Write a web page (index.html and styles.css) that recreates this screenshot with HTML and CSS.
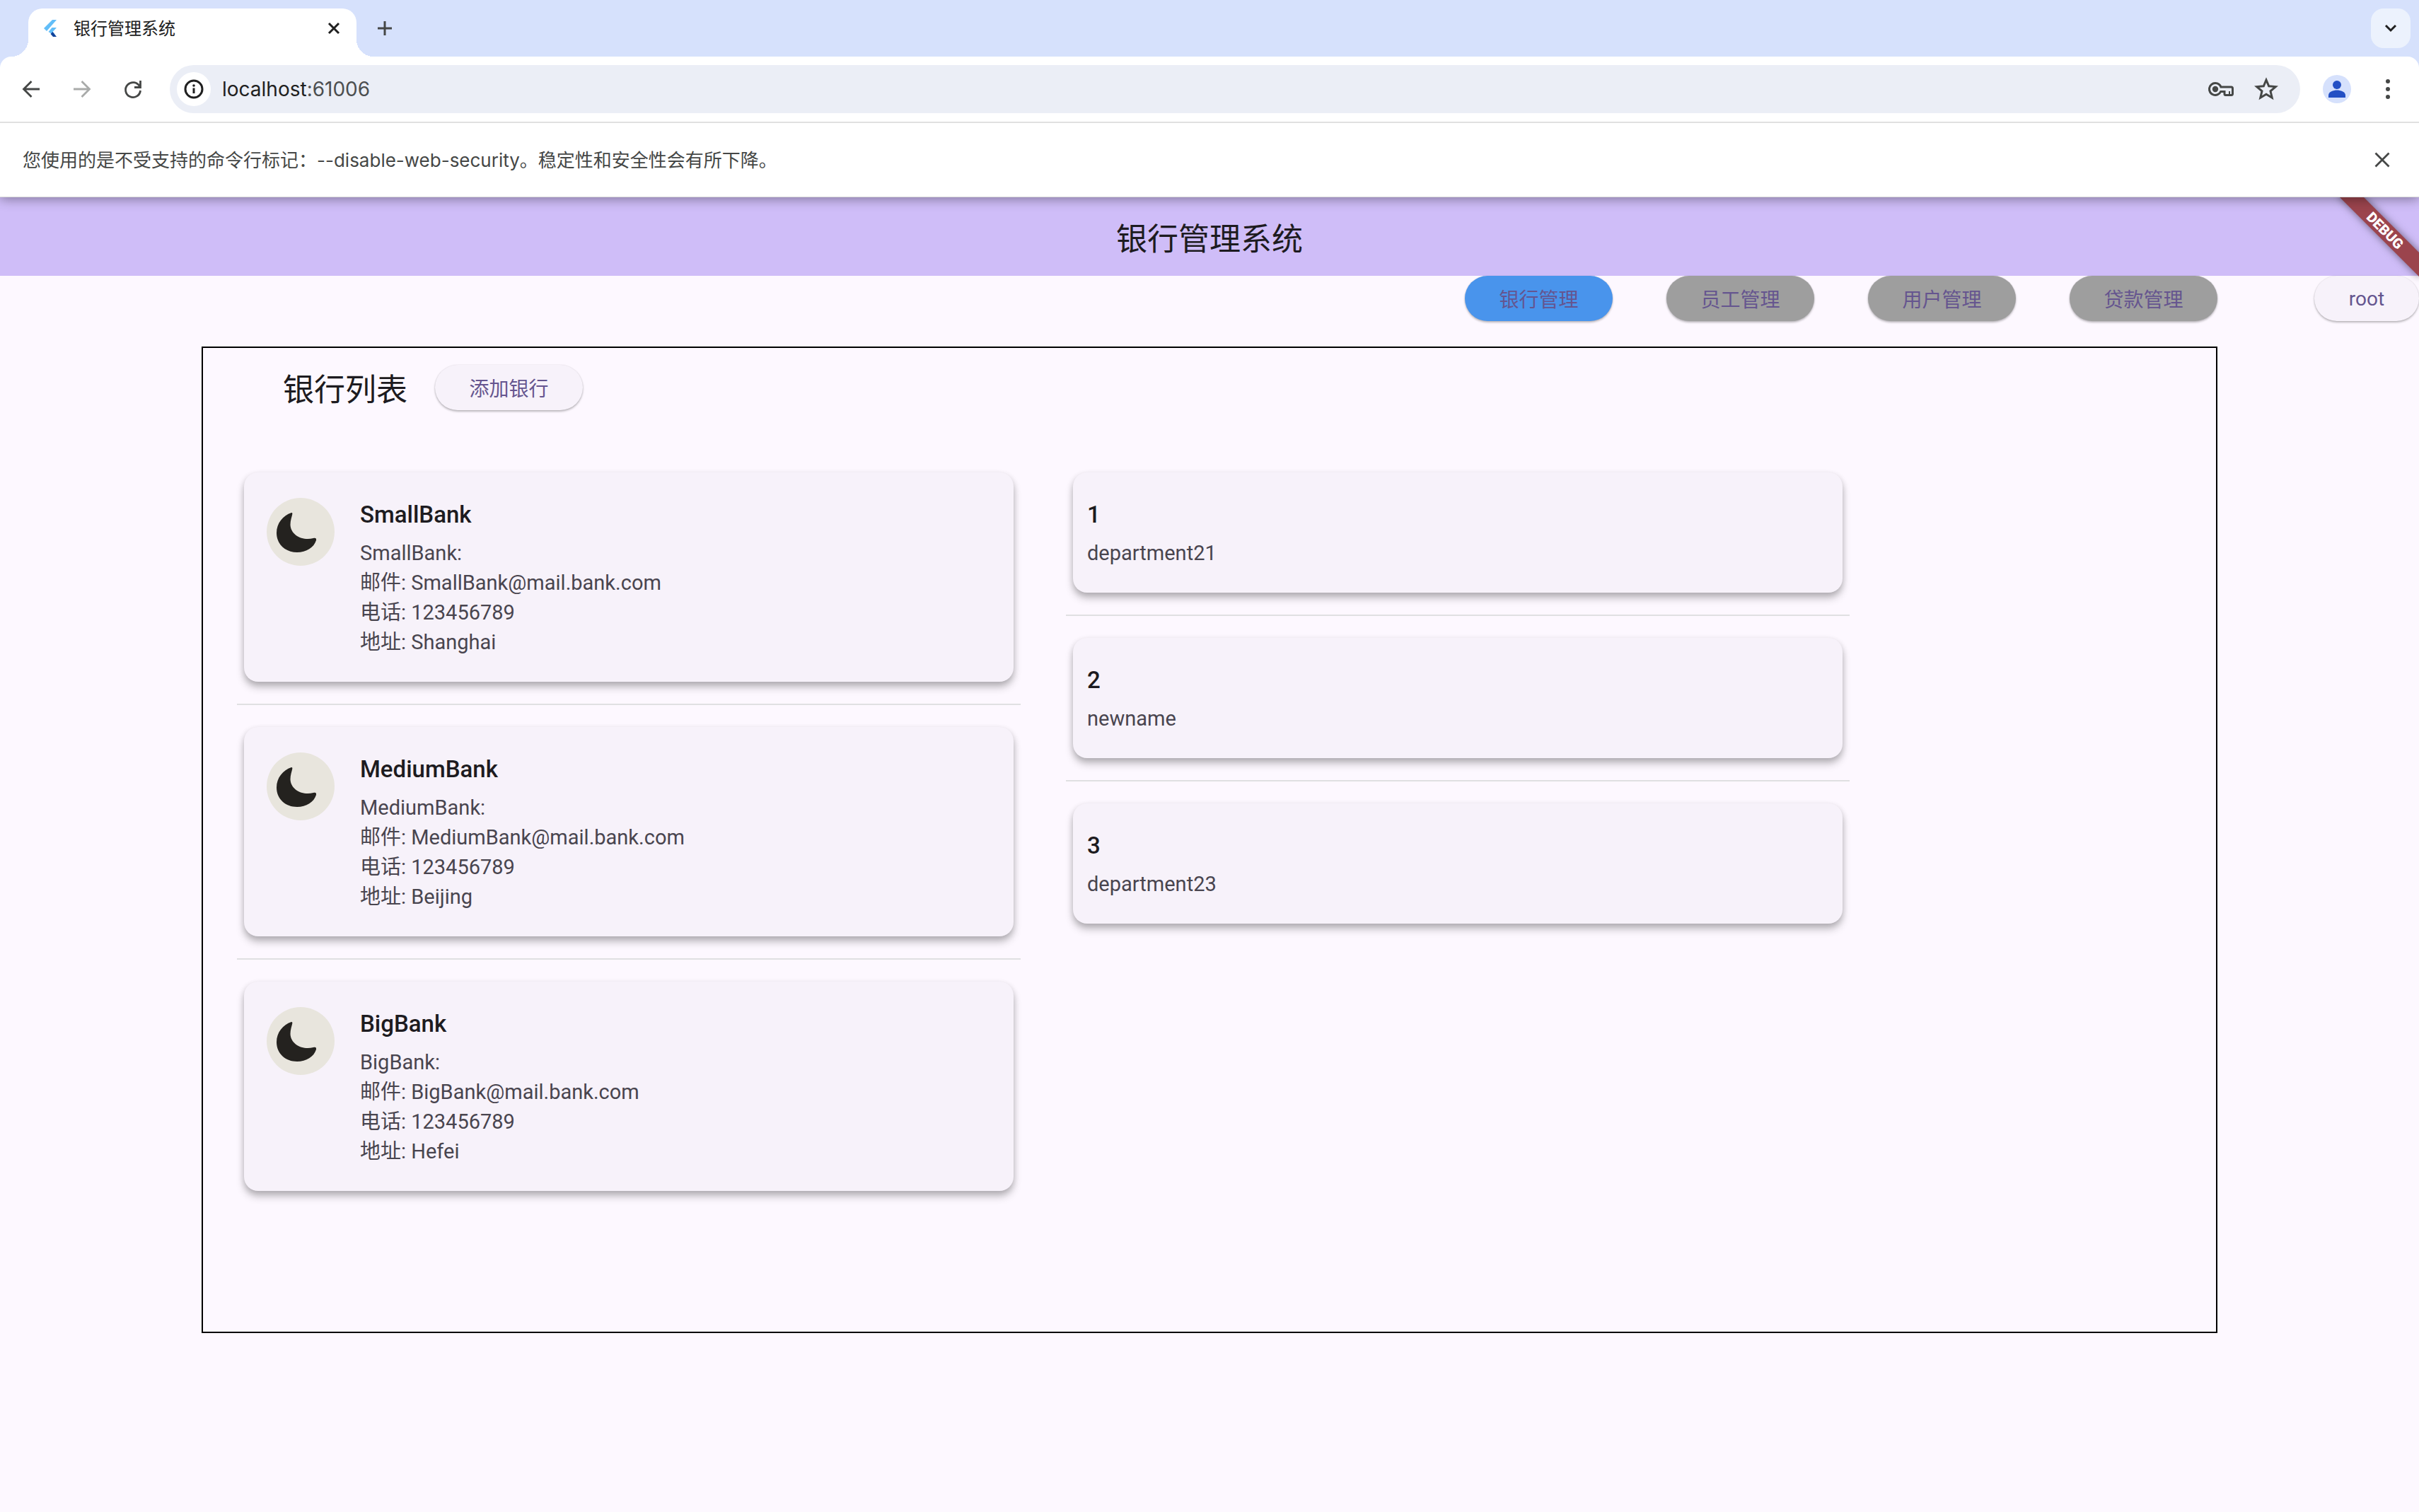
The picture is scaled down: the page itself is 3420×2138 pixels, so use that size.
FILE: index.html
```html
<!DOCTYPE html>
<html lang="zh-CN">
<head>
<meta charset="utf-8">
<title>银行管理系统</title>
<link rel="stylesheet" href="styles.css">
</head>
<body>
<svg class="defs" width="0" height="0" aria-hidden="true">
  <symbol id="moon" viewBox="0 0 96 96">
    <path fill="#24221f" d="M35 21C23 25 14 36 14 49.500C14 66 27 77 43 77C56 77 67 70 70 60C70.500 57 69 56 66 57C51 61 34 53 33.500 38C33.500 32 35.500 27 36.300 23C36.500 21.500 36 20.800 35 21Z"/>
  </symbol>
</svg>

<header class="browser">
  <div class="tabstrip">
    <div class="tab">
      <svg class="favicon" viewBox="0 0 32 32" aria-hidden="true">
        <path fill="#62bef8" d="M18 4h6L10 20l-4-4z"/>
        <path fill="#62bef8" d="M17.500 15H24l-5.500 6 3 3.500H18L12.500 21z"/>
        <path fill="#10439b" d="M15.500 24l3-3 5.500 7h-5z"/>
      </svg>
      <span class="tab-title">银行管理系统</span>
      <button class="icon-button tab-close" aria-label="关闭标签页">
        <svg width="32" height="32" viewBox="0 0 32 32"><path d="M9 9l14 14M23 9L9 23" fill="none" stroke="#202020" stroke-width="3"/></svg>
      </button>
    </div>
    <button class="icon-button new-tab" aria-label="新标签页">
      <svg width="32" height="32" viewBox="0 0 32 32"><path d="M16 6v20M6 16h20" fill="none" stroke="#454746" stroke-width="3"/></svg>
    </button>
    <button class="icon-button tab-search" aria-label="搜索标签页">
      <svg width="32" height="32" viewBox="0 0 32 32"><path d="M9 12l7 7 7-7" fill="none" stroke="#202020" stroke-width="3"/></svg>
    </button>
  </div>

  <div class="toolbar">
    <button class="icon-button tool" aria-label="返回">
      <svg width="36" height="36" viewBox="0 0 36 36"><path d="M30 18H8M18.500 7L7.500 18l11 11" fill="none" stroke="#454746" stroke-width="2.800"/></svg>
    </button>
    <button class="icon-button tool" aria-label="前进">
      <svg width="36" height="36" viewBox="0 0 36 36"><path d="M6 18h22M17.500 7l11 11-11 11" fill="none" stroke="#a9abaa" stroke-width="2.800"/></svg>
    </button>
    <button class="icon-button tool" aria-label="重新加载">
      <svg width="36" height="36" viewBox="0 0 36 36"><path d="M28.500 6v9.500H20M27.500 14.500A10.500 10.500 0 1 0 28.500 20" fill="none" stroke="#454746" stroke-width="2.800"/></svg>
    </button>
    <div class="omnibox">
      <button class="icon-button site-info" aria-label="网站信息">
        <svg width="32" height="32" viewBox="0 0 32 32"><circle cx="16" cy="16" r="12" fill="none" stroke="#202020" stroke-width="3"/><path d="M16 14.500V22" stroke="#202020" stroke-width="3"/><circle cx="16" cy="11" r="1.800" fill="#202020"/></svg>
      </button>
      <a class="url" href="#">localhost<span class="port">:61006</span></a>
      <button class="icon-button" aria-label="密码">
        <svg width="64" height="40" viewBox="0 0 64 40"><path d="M24 11.500a8.500 8.500 0 1 0 7.700 12H37v3.500q0 1.500 1.500 1.500h8q2 0 2-2V19q0-2-2-2H31.900A8.500 8.500 0 0 0 24 11.500z" fill="none" stroke="#454746" stroke-width="3"/><circle cx="24" cy="20" r="4.200" fill="#454746"/><path d="M44 23v5" stroke="#454746" stroke-width="2"/></svg>
      </button>
      <button class="icon-button" aria-label="收藏">
        <svg width="64" height="40" viewBox="0 0 64 40"><path d="M32 7l3.700 8.800 9.600.8-7.300 6.300 2.200 9.300-8.200-5-8.200 5 2.200-9.300-7.300-6.300 9.600-.8z" fill="none" stroke="#454746" stroke-width="3"/></svg>
      </button>
    </div>
    <button class="icon-button tool" aria-label="个人资料">
      <svg width="40" height="40" viewBox="0 0 40 40"><circle cx="20" cy="20" r="20" fill="#d6e1fc"/><circle cx="20" cy="14" r="6" fill="#2450c4"/><path d="M8 32v-3.500c0-4.500 7-7 12-7s12 2.500 12 7V32z" fill="#2450c4"/></svg>
    </button>
    <button class="icon-button tool" aria-label="菜单">
      <svg width="36" height="36" viewBox="0 0 36 36" fill="#454746"><circle cx="18" cy="7" r="3"/><circle cx="18" cy="18" r="3"/><circle cx="18" cy="29" r="3"/></svg>
    </button>
  </div>

  <div class="infobar">
    <p class="infobar-text">您使用的是不受支持的命令行标记：--disable-web-security。稳定性和安全性会有所下降。</p>
    <button class="icon-button tool" aria-label="关闭">
      <svg width="32" height="32" viewBox="0 0 32 32"><path d="M6.500 6.500l19 19M25.500 6.500l-19 19" fill="none" stroke="#454746" stroke-width="2.800"/></svg>
    </button>
  </div>
</header>

<main class="app">
  <div class="appbar">
    <h1 class="app-title">银行管理系统</h1>
  </div>
  <div class="debug"><span class="debug-ribbon">DEBUG</span></div>

  <nav class="nav">
    <button class="pill pill-active">银行管理</button>
    <button class="pill pill-idle">员工管理</button>
    <button class="pill pill-idle">用户管理</button>
    <button class="pill pill-idle">贷款管理</button>
    <button class="pill user">root</button>
  </nav>

  <section class="panel">
    <div class="panel-head">
      <h2 class="panel-title">银行列表</h2>
      <button class="pill">添加银行</button>
    </div>
    <div class="lists">
      <ul class="list">
        <li class="item">
          <article class="card bank">
            <svg class="avatar" aria-hidden="true"><use href="#moon"/></svg>
            <div>
              <h3 class="card-title">SmallBank</h3>
              <p class="card-text">SmallBank:<br>邮件: SmallBank@mail.bank.com<br>电话: 123456789<br>地址: Shanghai</p>
            </div>
          </article>
        </li>
        <li class="item">
          <article class="card bank">
            <svg class="avatar" aria-hidden="true"><use href="#moon"/></svg>
            <div>
              <h3 class="card-title">MediumBank</h3>
              <p class="card-text">MediumBank:<br>邮件: MediumBank@mail.bank.com<br>电话: 123456789<br>地址: Beijing</p>
            </div>
          </article>
        </li>
        <li class="item">
          <article class="card bank">
            <svg class="avatar" aria-hidden="true"><use href="#moon"/></svg>
            <div>
              <h3 class="card-title">BigBank</h3>
              <p class="card-text">BigBank:<br>邮件: BigBank@mail.bank.com<br>电话: 123456789<br>地址: Hefei</p>
            </div>
          </article>
        </li>
      </ul>
      <ul class="list">
        <li class="item">
          <article class="card department">
            <h3 class="card-title">1</h3>
            <p class="card-text">department21</p>
          </article>
        </li>
        <li class="item">
          <article class="card department">
            <h3 class="card-title">2</h3>
            <p class="card-text">newname</p>
          </article>
        </li>
        <li class="item">
          <article class="card department">
            <h3 class="card-title">3</h3>
            <p class="card-text">department23</p>
          </article>
        </li>
      </ul>
    </div>
  </section>
</main>
</body>
</html>
```
FILE: styles.css
```css
* {
  box-sizing: border-box;
}

body {
  margin: 0;
  min-height: 100vh;
  display: flex;
  flex-direction: column;
  background: #fdf8ff;
  color: #1d1b20;
  font-family: Roboto, "Noto Sans CJK SC", sans-serif;
  font-size: 28px;
}

h1, h2, h3, p, ul {
  margin: 0;
  padding: 0;
  font-weight: 400;
}

ul {
  list-style: none;
}

button {
  font: inherit;
  border: 0;
}

.defs {
  position: absolute;
}

/* Browser window */

.browser {
  position: relative;
  z-index: 2;
  background: #d6e1fc;
  box-shadow: 0 2px 16px rgba(0, 0, 0, 0.4);
  font-family: Inter, "Noto Sans CJK SC", sans-serif;
}

.icon-button {
  display: flex;
  align-items: center;
  justify-content: center;
  padding: 0;
  background: none;
}

.tabstrip {
  display: flex;
  padding: 12px 12px 0 40px;
}

.tab {
  position: relative;
  display: flex;
  align-items: center;
  gap: 16px;
  width: 464px;
  height: 68px;
  padding: 0 16px 12px;
  border-radius: 20px 20px 0 0;
  background: #fff;
}

.tab::before,
.tab::after {
  content: "";
  position: absolute;
  bottom: 0;
  width: 24px;
  height: 24px;
}

.tab::before {
  right: 100%;
  background: radial-gradient(circle at 0 0, transparent 24px, #fff 24px);
}

.tab::after {
  left: 100%;
  background: radial-gradient(circle at 100% 0, transparent 24px, #fff 24px);
}

.favicon {
  width: 32px;
  height: 32px;
}

.tab-title {
  padding-bottom: 4px;
  color: #202020;
  font-size: 24px;
}

.tab-close {
  margin-left: auto;
}

.new-tab {
  width: 56px;
  height: 56px;
  margin-left: 12px;
}

.tab-search {
  width: 56px;
  height: 56px;
  margin-left: auto;
  border-radius: 18px;
  background: #ecf2fd;
}

.toolbar {
  display: flex;
  align-items: center;
  padding: 12px 8px;
  border-radius: 16px 16px 0 0;
  background: #fff;
}

.tool {
  width: 72px;
  height: 68px;
}

.omnibox {
  flex: 1;
  display: flex;
  align-items: center;
  height: 68px;
  margin: 0 16px;
  padding: 0 16px 0 10px;
  border-radius: 34px;
  background: #ebeef6;
}

.site-info {
  width: 48px;
  height: 48px;
  border-radius: 50%;
  background: #fff;
}

.url {
  flex: 1;
  margin-left: 16px;
  color: #202020;
  text-decoration: none;
}

.port {
  color: #4c4e50;
}

.infobar {
  display: flex;
  align-items: center;
  justify-content: space-between;
  height: 107px;
  padding: 0 16px 0 32px;
  border-top: 2px solid #e0e0e0;
  border-bottom: 1px solid #d8d8d8;
  background: #fff;
}

.infobar-text {
  padding-bottom: 4px;
  color: #454746;
  font-size: 26px;
}

/* Application */

.app {
  position: relative;
  flex: 1;
  display: flex;
  flex-direction: column;
}

.appbar {
  display: flex;
  align-items: center;
  justify-content: center;
  height: 111px;
  background: #cfbdf8;
}

.app-title,
.panel-title {
  padding-top: 8px;
  font-size: 44px;
  line-height: 56px;
}

.debug {
  position: absolute;
  top: 0;
  right: 0;
  width: 160px;
  height: 160px;
  overflow: hidden;
}

.debug-ribbon {
  position: absolute;
  top: 35px;
  right: -32px;
  width: 160px;
  background: #9b444d;
  box-shadow: 0 0 12px rgba(0, 0, 0, 0.5);
  color: #fff;
  font-size: 20px;
  font-weight: 900;
  line-height: 24px;
  text-align: center;
  transform: rotate(45deg);
}

.nav {
  display: flex;
  justify-content: flex-end;
  gap: 76px;
}

.pill {
  min-width: 209px;
  height: 64px;
  padding: 0 48px;
  border-radius: 32px;
  background: #f7f2fa;
  box-shadow: 0 2px 3px rgba(0, 0, 0, 0.25), 0 0 2px rgba(0, 0, 0, 0.12);
  color: #65558f;
}

.pill-active {
  background: #4994ec;
}

.pill-idle {
  background: #9e9e9e;
}

.user {
  min-width: 148px;
  margin-left: 61px;
}

.panel {
  flex: 1;
  width: calc(100% * 5 / 6);
  margin: 36px auto 253px;
  border: 2px solid #000;
}

.panel-head {
  display: flex;
  align-items: center;
  gap: 39px;
  padding: 24px 0 0 113px;
}

.lists {
  display: grid;
  grid-template-columns: 1108fr 1108fr 454fr;
  gap: 64px;
  padding: 88px 0 0 48px;
}

.item:not(:last-child) {
  margin-bottom: 31px;
  padding-bottom: 31px;
  border-bottom: 2px solid #e0e0e2;
}

.card {
  margin: 0 10px;
  padding: 36px 32px 35px;
  border-radius: 20px;
  background: #f7f2fa;
  box-shadow: 0 8px 12px rgba(0, 0, 0, 0.22), 0 3px 8px rgba(0, 0, 0, 0.14);
}

.bank {
  display: flex;
  gap: 36px;
}

.department {
  padding-left: 20px;
}

.avatar {
  width: 96px;
  height: 96px;
  border-radius: 50%;
  background: #e8e5dd;
}

.card-title {
  margin-bottom: 9px;
  font-size: 33px;
  font-weight: 500;
  line-height: 48px;
}

.card-text {
  color: #49454f;
  font-size: 29px;
  line-height: 42px;
}
```
